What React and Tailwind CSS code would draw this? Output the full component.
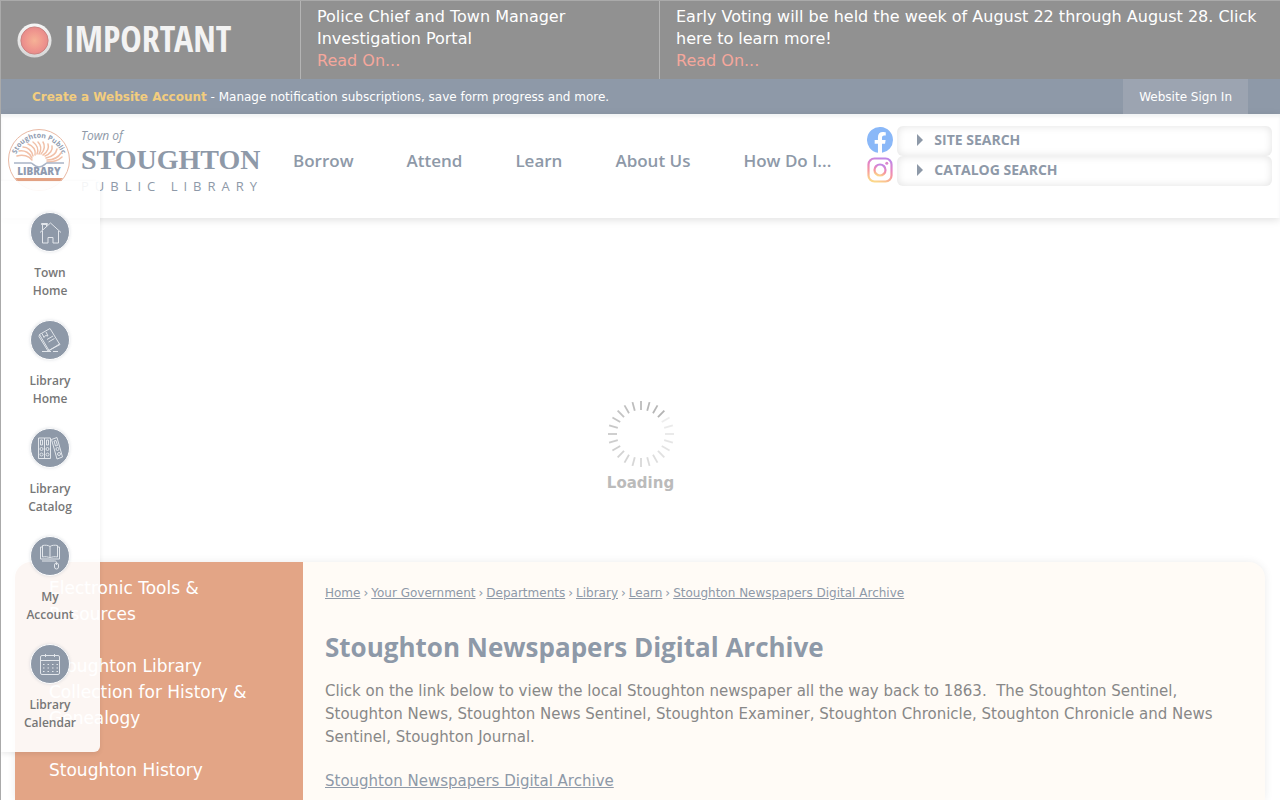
import { useState } from "react";

const navItems = ["Borrow", "Attend", "Learn", "About Us", "How Do I..."];

const alerts = [
  {
    text: "Police Chief and Town Manager Investigation Portal",
    width: "w-[359px] shrink-0",
  },
  {
    text: "Early Voting will be held the week of August 22 through August 28. Click here to learn more!",
    width: "flex-1",
  },
];

const breadcrumbs = [
  "Home",
  "Your Government",
  "Departments",
  "Library",
  "Learn",
  "Stoughton Newspapers Digital Archive",
];

const sideLinks = [
  "Electronic Tools & Resources",
  "Stoughton Library Collection for History & Genealogy",
  "Stoughton History",
];

const HouseIcon = () => (
  <>
    <path d="M10 20.500 20.500 11l10.500 9.500" />
    <path d="M12.500 19v12h5.500v-5.500h5v5.500h5.500V19" />
    <path d="M12.500 18v-5.500h4v2" />
    <path d="M11.500 11.500h6v1h-6z" />
  </>
);

const BookIcon = () => (
  <>
    <path d="m9.500 14.500 10.500-6 9.500 15.500-10.500 6.500z" />
    <path d="m9.500 14.500-.5 2 9 14.500 12-6.500-.5-1" />
    <path d="m12 13.500 2 4 1.500-2 2.500.5-2-4" />
    <path d="m17 19.500 6-3.500M18.500 22l6-3.500" />
    <path d="M12 31.500h9M23 31.500h5" />
  </>
);

const BindersIcon = () => (
  <>
    <path d="M8.500 10h6v20.500h-6zM14.500 10h6v20.500h-6z" />
    <path d="m21.500 11.500 5.500-2 5.500 19.500-5.500 2z" />
    <path d="M10.500 12h2v5h-2zM16.500 12h2v5h-2z" />
    <path d="m24 13 2-.5 1.500 5-2 .5z" />
    <circle cx="11.500" cy="21" r="1.500" />
    <circle cx="17.500" cy="21" r="1.500" />
    <circle cx="27.500" cy="21" r="1.500" />
    <circle cx="11.500" cy="26.500" r="1.500" />
    <circle cx="17.500" cy="26.500" r="1.500" />
    <circle cx="29" cy="26" r="1.500" />
  </>
);

const EBookIcon = () => (
  <>
    <path d="M20 10.500c-2-1.500-5-1.500-7.500-1v11.500c2.500-.5 5.500-.5 7.500 1 2-1.500 5-1.500 7.500-1V9.500c-2.500-.5-5.500-.5-7.500 1z" />
    <path d="M20 10.500V22M12.500 11h-2v12h9l.5.5.5-.5h9V11h-2" />
    <path d="M12 25h12.500c2 0 2 1 2 2" />
    <rect x="24.500" y="27" width="4" height="6" rx="2" />
    <path d="M26.500 27v2" />
  </>
);

const CalendarIcon = () => (
  <>
    <rect x="10.500" y="11.500" width="19" height="19" rx="1.500" />
    <path d="M10.500 16.500h19M15.500 10v3M24.500 10v3" />
    <path strokeDasharray="1.500 3" d="M13 20.500h15M13 24h15M13 27.500h15" />
  </>
);

const quickLinks = [
  { label: ["Town", "Home"], icon: HouseIcon },
  { label: ["Library", "Home"], icon: BookIcon },
  { label: ["Library", "Catalog"], icon: BindersIcon },
  { label: ["My", "Account"], icon: EBookIcon },
  { label: ["Library", "Calendar"], icon: CalendarIcon },
];

const EmergencyBar = () => (
  <section className="flex bg-[#919191] text-white">
    <div className="flex w-[299px] shrink-0 items-center gap-3 pl-4">
      <svg width="35" height="35" viewBox="0 0 36 36" aria-hidden="true">
        <defs>
          <radialGradient id="beacon">
            <stop offset="0" stopColor="#f5b296" />
            <stop offset="0.6" stopColor="#f0998f" />
            <stop offset="1" stopColor="#e88a8a" />
          </radialGradient>
          <linearGradient id="ring" x1="0" y1="0" x2="0" y2="1">
            <stop offset="0" stopColor="#f6f6f6" />
            <stop offset="1" stopColor="#d6d6d6" />
          </linearGradient>
        </defs>
        <circle cx="18" cy="18" r="17.500" fill="url(#ring)" />
        <circle cx="18" cy="18" r="14" fill="url(#beacon)" stroke="#c9827f" />
      </svg>
      <h2 className="pb-0.5 font-['Open_Sans_Condensed','Noto_Sans_Condensed','Roboto_Condensed','Liberation_Sans_Narrow',sans-serif] text-4xl leading-[44px] font-bold text-[#f3f3f3]">
        IMPORTANT
      </h2>
    </div>
    {alerts.map((alert) => (
      <div
        key={alert.text}
        className={`${alert.width} border-l border-[#b4b4b4] px-4 pt-[5px] pb-[7px] text-base leading-[22px]`}
      >
        <p>{alert.text}</p>
        <a href="#read" className="text-[#f5a79c]">
          Read On...
        </a>
      </div>
    ))}
  </section>
);

const AccountBar = () => (
  <div className="flex h-[35px] items-stretch justify-between bg-[#8e99a8] pr-8 pl-[31px] text-xs text-white">
    <p className="self-center">
      <a href="#account" className="font-bold text-[#f3cd7e]">
        Create a Website Account
      </a>{" "}
      - Manage notification subscriptions, save form progress and more.
    </p>
    <a href="#signin" className="flex items-center bg-[#9ca4b1] px-4">
      Website Sign In
    </a>
  </div>
);

const Logo = () => (
  <a href="#home" className="flex gap-[10px] pt-0.5">
    <svg width="64" height="64" viewBox="0 0 64 64" aria-hidden="true">
      <defs>
        <path id="sealArc" d="M9 27A24 24 0 0 1 55 27" />
        <clipPath id="sealClip">
          <circle cx="32" cy="32" r="30" />
        </clipPath>
      </defs>
      <circle cx="32" cy="32" r="30.500" fill="#fff" stroke="#e9b9a4" />
      <text
        fill="#8f9bb0"
        fontSize="7"
        fontWeight="700"
        fontFamily="Open Sans, sans-serif"
      >
        <textPath href="#sealArc" startOffset="50%" textAnchor="middle">
          Stoughton Public
        </textPath>
      </text>
      <g stroke="#f1c0a8" strokeWidth="1.500" fill="none" strokeLinecap="round">
        <path d="M25 32c-3-4-9-6-15-4" />
        <path d="M25 30c-2-5-7-8-13-7" />
        <path d="M26 28c-1-5-5-9-10-9" />
        <path d="M28 27c1-5-2-9-7-11" />
        <path d="M30 26c2-5 0-9-4-12" />
        <path d="M32 26c3-5 2-9-1-12" />
        <path d="M34 26c4-4 4-9 2-12" />
        <path d="M36 27c5-3 6-8 5-11" />
        <path d="M38 28c5-2 8-6 7-10" />
        <path d="M39 30c5-1 10-4 11-9" />
        <path d="M40 32c5 0 11-2 14-7" />
        <path d="M40 34c5 0 11-1 15-5" />
      </g>
      <path
        d="M7 35h17c2 0 3 4 8 4s6-4 8-4h17"
        fill="none"
        stroke="#a9b4c6"
        strokeWidth="1.500"
      />
      <text
        x="32"
        y="47"
        textAnchor="middle"
        fill="#8f9bb0"
        fontSize="10"
        fontWeight="800"
        fontFamily="Open Sans, sans-serif"
      >
        LIBRARY
      </text>
      <g clipPath="url(#sealClip)">
        <rect y="50" width="64" height="4" fill="#e5a384" />
        <rect y="54" width="64" height="10" fill="#fbe6df" />
      </g>
    </svg>
    <span className="flex w-[177px] flex-col text-[#8e99a8]">
      <span className="font-['Open_Sans',sans-serif] text-xs leading-4 italic">
        Town of
      </span>
      <span className="font-['Liberation_Serif',serif] text-[28px] leading-8 font-bold">
        STOUGHTON
      </span>
      <span className="font-['Open_Sans',sans-serif] text-[13px] leading-5 tracking-[6px] whitespace-nowrap">
        PUBLIC LIBRARY
      </span>
    </span>
  </a>
);

const SocialIcons = () => (
  <div className="flex flex-col gap-1 pt-px">
    <a href="#facebook" aria-label="Facebook">
      <svg width="26" height="26" viewBox="0 0 24 24">
        <path
          fill="#8ab8f8"
          d="M24 12a12 12 0 1 0-13.900 11.850v-8.380H7.080V12h3.020V9.360c0-3 1.790-4.670 4.530-4.670 1.310 0 2.690.24 2.690.24v2.950h-1.510c-1.490 0-1.950.93-1.950 1.880V12h3.320l-.53 3.470h-2.790v8.380A12 12 0 0 0 24 12z"
        />
      </svg>
    </a>
    <a href="#instagram" aria-label="Instagram">
      <svg width="26" height="26" viewBox="0 0 26 26" fill="none">
        <defs>
          <linearGradient id="insta" x1="0.300" y1="1" x2="0.600" y2="0">
            <stop offset="0" stopColor="#fbd78a" />
            <stop offset="0.350" stopColor="#f79a9c" />
            <stop offset="0.650" stopColor="#e584c4" />
            <stop offset="1" stopColor="#c088e6" />
          </linearGradient>
        </defs>
        <g stroke="url(#insta)" strokeWidth="2.200">
          <rect x="1.500" y="1.500" width="23" height="23" rx="6" />
          <circle cx="13" cy="13" r="5.500" />
        </g>
        <circle cx="19.800" cy="6.200" r="1.500" fill="#dc86cc" />
      </svg>
    </a>
  </div>
);

const SearchToggle = ({ label }) => {
  const [open, setOpen] = useState(false);

  return (
    <button
      type="button"
      aria-expanded={open}
      onClick={() => setOpen(!open)}
      className="flex h-[30px] items-center gap-[11px] rounded-md pb-0.5 pl-5 font-['Open_Sans',sans-serif] text-sm font-bold text-[#8e99a8] shadow-[inset_0_0_8px_rgba(0,0,0,0.12)]"
    >
      <svg width="6" height="12" viewBox="0 0 6 12" aria-hidden="true">
        <path d="M0 0v12l6-6z" fill="#8e99a8" />
      </svg>
      {label}
    </button>
  );
};

const QuickLinks = () => (
  <nav
    aria-label="Quick links"
    className="absolute top-[180px] left-0 flex w-[99px] flex-col gap-5 rounded-r-md bg-white/90 pt-[31px] pr-px pb-5 shadow-[0_2px_5px_rgba(0,0,0,0.08)]"
  >
    {quickLinks.map(({ label, icon: Icon }) => (
      <a
        key={label.join(" ")}
        href="#quick"
        className="flex flex-col items-center gap-3 font-['Open_Sans',sans-serif] text-xs leading-[18px] font-semibold text-[#777]"
      >
        <span className="rounded-full border border-white bg-[#8e99a8] shadow-[0_0_3px_rgba(142,153,168,0.3)]">
          <svg
            width="38"
            height="38"
            viewBox="1 1 38 38"
            fill="none"
            stroke="#e2e6eb"
            aria-hidden="true"
          >
            <Icon />
          </svg>
        </span>
        <span className="text-center">
          {label[0]}
          <br />
          {label[1]}
        </span>
      </a>
    ))}
  </nav>
);

const Spinner = () => {
  const ticks = Array.from({ length: 24 }, (_, i) => i);

  return (
    <div
      role="status"
      className="flex h-[344px] flex-col items-center gap-1 pt-[182px] text-[15px] leading-[22px] font-bold text-[#bbb]"
    >
      <svg width="68" height="68" viewBox="-34 -34 68 68" aria-hidden="true">
        {ticks.map((i) => (
          <line
            key={i}
            y1="-33"
            y2="-24"
            stroke="#8c8c8c"
            strokeWidth="1.800"
            opacity={0.15 + (((i + 20) % 24) / 23) * 0.5}
            transform={`rotate(${i * 15})`}
          />
        ))}
      </svg>
      Loading
    </div>
  );
};

const App = () => {
  return (
    <div className="relative min-h-screen overflow-x-hidden border-t border-l border-[#aaa] bg-white font-['DejaVu_Sans',sans-serif]">
      <EmergencyBar />
      <AccountBar />

      <header className="flex min-h-[104px] items-start pt-3 pr-2 pl-[6px] shadow-[0_2px_8px_rgba(0,0,0,0.12),inset_0_3px_3px_rgba(142,153,168,0.12)]">
        <Logo />
        <nav className="flex gap-[53px] pt-[23px] pl-[35px] font-['Open_Sans',sans-serif] text-[17px] leading-6 font-semibold whitespace-nowrap text-[#8e99a8]">
          {navItems.map((item) => (
            <a key={item} href="#nav">
              {item}
            </a>
          ))}
        </nav>
        <div className="flex flex-1 gap-1 pl-9">
          <SocialIcons />
          <div className="flex flex-1 flex-col">
            <SearchToggle label="SITE SEARCH" />
            <SearchToggle label="CATALOG SEARCH" />
          </div>
        </div>
      </header>

      <Spinner />

      <main className="mr-[15px] ml-[14px] flex min-h-[238px] overflow-hidden rounded-t-2xl bg-[#fffbf6] shadow-[0_0_8px_rgba(0,0,0,0.08)]">
        <aside className="w-72 shrink-0 bg-[#e3a586] pt-[13px] pr-8 pl-[34px]">
          <ul className="flex flex-col gap-[26px] text-[17px] leading-[26px] text-white">
            {sideLinks.map((link) => (
              <li key={link}>
                <a href="#side">{link}</a>
              </li>
            ))}
          </ul>
        </aside>
        <article className="flex-1 px-[22px] pt-[21px] text-[15px] leading-[23px] text-[#888]">
          <nav aria-label="Breadcrumb">
            <ol className="flex gap-[3px] text-xs leading-5 text-[#8e99a8]">
              {breadcrumbs.map((crumb, i) => (
                <li key={crumb} className="flex gap-[3px]">
                  {i > 0 && <span>›</span>}
                  <a href="#crumb" className="underline">
                    {crumb}
                  </a>
                </li>
              ))}
            </ol>
          </nav>
          <h1 className="mt-6 font-['Open_Sans',sans-serif] text-[26px] leading-10 font-bold text-[#8e99a8]">
            Stoughton Newspapers Digital Archive
          </h1>
          <p className="mt-[13px]">
            Click on the link below to view the local Stoughton newspaper all
            the way back to 1863.&nbsp; The Stoughton Sentinel, Stoughton News,
            Stoughton News Sentinel, Stoughton Examiner, Stoughton Chronicle,
            Stoughton Chronicle and News Sentinel, Stoughton Journal.
          </p>
          <p className="mt-[21px]">
            <a href="#archive" className="text-[#8e99a8] underline">
              Stoughton Newspapers Digital Archive
            </a>
          </p>
        </article>
      </main>

      <QuickLinks />
    </div>
  );
};

export default App;
